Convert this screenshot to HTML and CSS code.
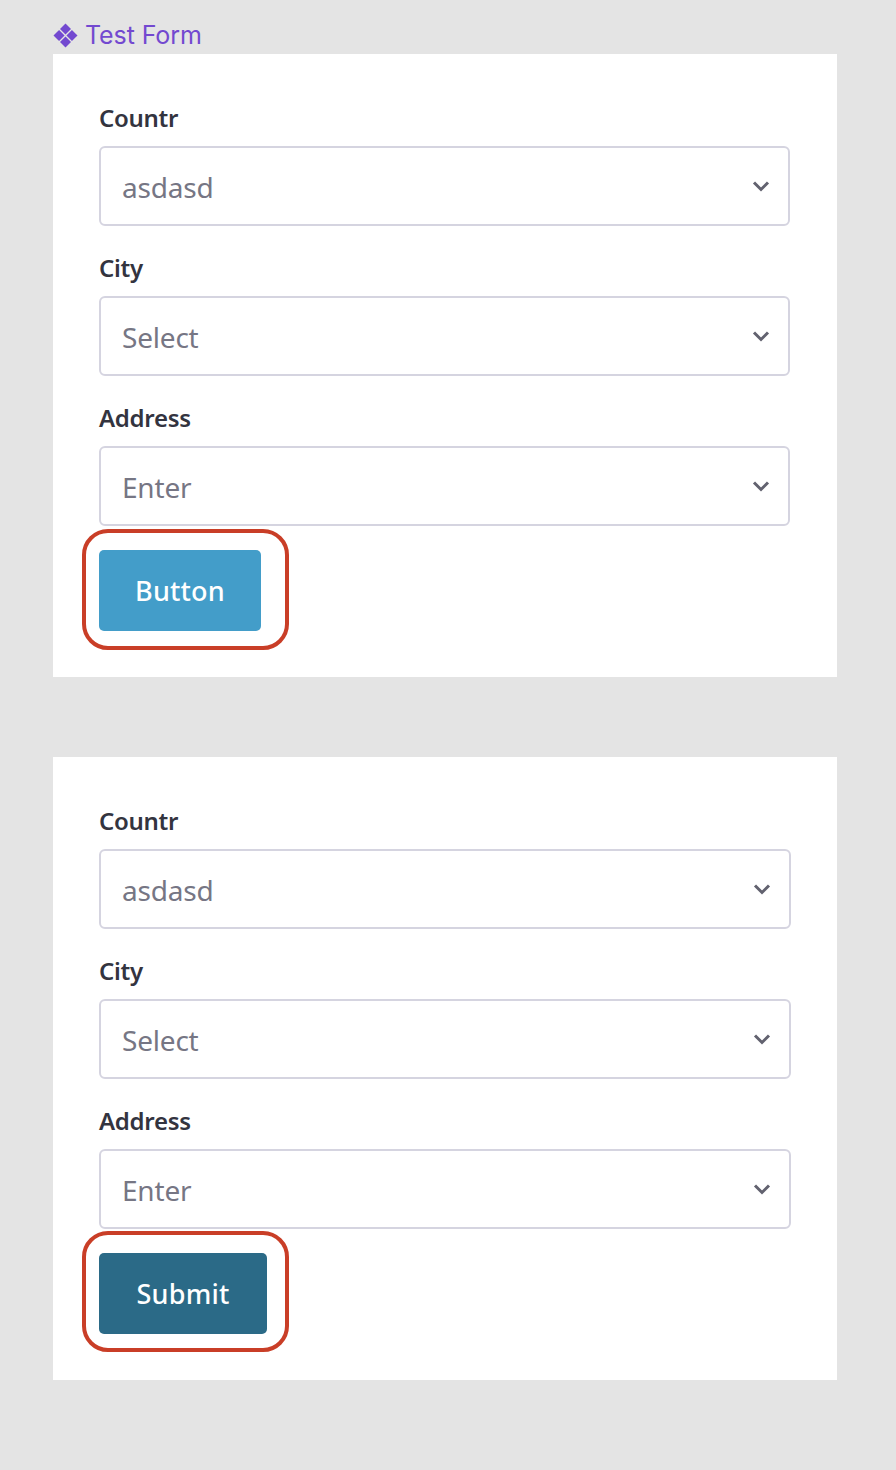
FILE: index.html
```html
<!DOCTYPE html>
<html lang="en">
<head>
<meta charset="utf-8">
<title>Test Form</title>
<link rel="stylesheet" href="styles.css">
</head>
<body>
<main class="page">
  <div class="title">
    <svg class="title-icon" viewBox="0 0 24 24" aria-hidden="true">
      <path d="M12 .5 17.300 5.800 12 11.100 6.700 5.800Z"/>
      <path d="M18.200 6.700 23.500 12 18.200 17.300 12.900 12Z"/>
      <path d="M12 12.900 17.300 18.200 12 23.500 6.700 18.200Z"/>
      <path d="M5.800 6.700 11.100 12 5.800 17.300 .5 12Z"/>
    </svg>
    <span>Test Form</span>
  </div>

  <section class="card">
    <div class="field">
      <label class="label">Countr</label>
      <div class="select">
        <span class="value">asdasd</span>
        <svg class="chevron" viewBox="0 0 18 12" width="18" height="12" aria-hidden="true"><path d="M2 2.500 9 9.500 16 2.500"/></svg>
      </div>
    </div>
    <div class="field">
      <label class="label">City</label>
      <div class="select">
        <span class="value">Select</span>
        <svg class="chevron" viewBox="0 0 18 12" width="18" height="12" aria-hidden="true"><path d="M2 2.500 9 9.500 16 2.500"/></svg>
      </div>
    </div>
    <div class="field">
      <label class="label">Address</label>
      <div class="select">
        <span class="value">Enter</span>
        <svg class="chevron" viewBox="0 0 18 12" width="18" height="12" aria-hidden="true"><path d="M2 2.500 9 9.500 16 2.500"/></svg>
      </div>
    </div>
    <div class="action">
      <button class="btn btn-light" type="button">Button</button>
      <span class="ring"></span>
    </div>
  </section>

  <section class="card card-second">
    <div class="field">
      <label class="label">Countr</label>
      <div class="select">
        <span class="value">asdasd</span>
        <svg class="chevron" viewBox="0 0 18 12" width="18" height="12" aria-hidden="true"><path d="M2 2.500 9 9.500 16 2.500"/></svg>
      </div>
    </div>
    <div class="field">
      <label class="label">City</label>
      <div class="select">
        <span class="value">Select</span>
        <svg class="chevron" viewBox="0 0 18 12" width="18" height="12" aria-hidden="true"><path d="M2 2.500 9 9.500 16 2.500"/></svg>
      </div>
    </div>
    <div class="field">
      <label class="label">Address</label>
      <div class="select">
        <span class="value">Enter</span>
        <svg class="chevron" viewBox="0 0 18 12" width="18" height="12" aria-hidden="true"><path d="M2 2.500 9 9.500 16 2.500"/></svg>
      </div>
    </div>
    <div class="action">
      <button class="btn btn-dark" type="button">Submit</button>
      <span class="ring"></span>
    </div>
  </section>
</main>
</body>
</html>
```
FILE: styles.css
```css
* { box-sizing: border-box; }

html, body {
  margin: 0;
  height: 100%;
}

body {
  background: #e4e4e4;
  font-family: "Noto Sans", "Open Sans", sans-serif;
}

.page {
  width: 896px;
  height: 1470px;
  padding: 20px 59px 0 53px;
  overflow: hidden;
}

.title {
  display: flex;
  align-items: center;
  gap: 7px;
  height: 34px;
  padding-bottom: 4px;
  color: #7349d0;
  font-family: "Inter", sans-serif;
  font-size: 25px;
  letter-spacing: -0.1px;
}

.title-icon {
  fill: #7349d0;
  flex: none;
  width: 25px;
  height: 25px;
}

.card {
  width: 784px;
  height: 623px;
  padding: 46px 46px 0;
  background: #fff;
}

.card-second {
  margin-top: 80px;
}

.field {
  height: 150px;
}

.label {
  display: block;
  height: 46px;
  color: #33343f;
  font-size: 24px;
  font-weight: 600;
  line-height: 36px;
  letter-spacing: -0.3px;
}

.select {
  display: flex;
  align-items: center;
  justify-content: space-between;
  width: 691px;
  height: 80px;
  padding: 2px 18px 0 21px;
  border: 2px solid #d5d4e0;
  border-radius: 6px;
  background: #fff;
}

.card-second .select {
  width: 692px;
}

.value {
  color: #767684;
  font-size: 28px;
  letter-spacing: -0.2px;
}

.chevron {
  margin-top: -2px;
  fill: none;
  stroke: #62626f;
  stroke-width: 3;
}

.action {
  position: relative;
}

.btn {
  display: block;
  height: 81px;
  border: 0;
  border-radius: 5px;
  color: #fff;
  font-family: inherit;
  font-size: 27px;
  font-weight: 500;
  letter-spacing: 0.2px;
}

.btn-light {
  width: 162px;
  background: #439dc9;
}

.btn-dark {
  width: 168px;
  background: #2b6a87;
}

.ring {
  position: absolute;
  top: -21px;
  left: -17px;
  width: 207px;
  height: 121px;
  border: 4px solid #c93e27;
  border-radius: 26px;
  pointer-events: none;
}

.card-second .ring {
  top: -22px;
}
```
